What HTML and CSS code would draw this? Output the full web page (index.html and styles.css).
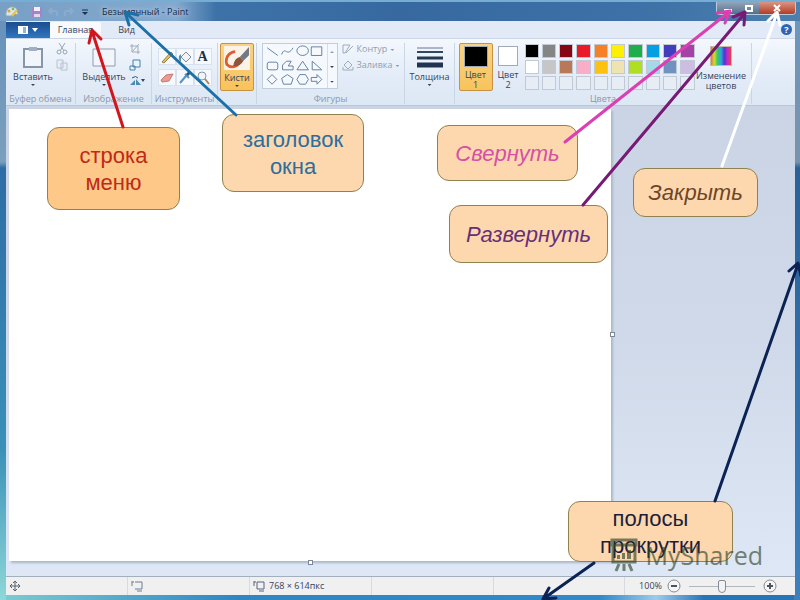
FILE: index.html
```html
<!DOCTYPE html>
<html lang="ru">
  <head>
    <meta charset="UTF-8" />
    <title>Безымянный - Paint</title>
    <link rel="stylesheet" href="styles.css">
  </head>
  <body>
    <div class="window">
      <header class="titlebar">
        <svg class="app-icon" viewBox="0 0 14 14"><path d="M1 11C0 5 4 1 8 2c4 0 5 4 5 8l-4-1-3 2z" fill="#d9e6e6" stroke="#8aa3b4"/><circle cx="4" cy="6" r="1.5" fill="#e0a43c"/><circle cx="8" cy="4" r="1.3" fill="#79b65c"/><path d="M7 11l5-6" stroke="#e9c14c" stroke-width="2"/></svg>
        <button class="quick" aria-label="Сохранить"><svg viewBox="0 0 12 12"><path d="M1 1h10v10H1z" fill="#a583c9"/><path d="M3 1h6v4H3z" fill="#f3eefa"/><path d="M3 8h6v3H3z" fill="#e3d7f0"/></svg></button>
        <button class="quick faded" aria-label="Отменить"><svg viewBox="0 0 12 12"><path d="M2 5h6q3 0 2 5M5 2L2 5l3 3" fill="none" stroke="#9cb6d4" stroke-width="2"/></svg></button>
        <button class="quick faded" aria-label="Вернуть"><svg viewBox="0 0 12 12"><path d="M10 5H4q-3 0-2 5M7 2l3 3-3 3" fill="none" stroke="#9cb6d4" stroke-width="2"/></svg></button>
        <button class="quick" aria-label="Настройка панели"><svg viewBox="0 0 12 12"><path d="M3 4h6" stroke="#1d3150"/><path d="M3 6h6l-3 3z" fill="#1d3150"/></svg></button>
        <h1>Безымянный - Paint</h1>
        <div class="window-buttons">
          <button aria-label="Свернуть окно"><svg viewBox="0 0 12 10"><path d="M2 6h8v3H2z" fill="#fff"/></svg></button>
          <button aria-label="Развернуть окно"><svg viewBox="0 0 12 10"><path d="M3 3h6v5H3z" fill="none" stroke="#fff" stroke-width="2"/></svg></button>
          <button class="close" aria-label="Закрыть окно"><svg viewBox="0 0 12 10"><path d="M3 2l6 6M9 2L3 8" stroke="#fff" stroke-width="2"/></svg></button>
        </div>
      </header>

      <nav class="tabs">
        <button class="file-tab" aria-label="Файл"><svg viewBox="0 0 24 10"><path d="M2 1h10v8H2z" fill="#fff"/><path d="M7 3h3M7 5h3M7 7h3" stroke="#2a68ad"/><path d="M16 3h6l-3 4z" fill="#fff"/></svg></button>
        <button class="tab active">Главная</button>
        <button class="tab">Вид</button>
        <button class="help" aria-label="Справка">?</button>
      </nav>

      <section class="ribbon">
        <div class="group clipboard">
          <div class="tools">
            <button class="big"><svg viewBox="0 0 24 24"><path d="M3 4h18v18H3z" fill="#f2f5fa" stroke="#8797ab" stroke-width="2"/><path d="M8 2h8v4H8z" fill="#a3afc0"/></svg>Вставить<i class="caret"></i></button>
            <div class="stack">
              <button aria-label="Вырезать"><svg viewBox="0 0 12 12"><path d="M3 0l5 8M9 0L4 8" stroke="#99a6b6" fill="none"/><circle cx="3" cy="9" r="2" fill="none" stroke="#99a6b6"/><circle cx="9" cy="9" r="2" fill="none" stroke="#99a6b6"/></svg></button>
              <button aria-label="Копировать"><svg viewBox="0 0 12 12"><path d="M1 1h6v8H1zM5 4h6v7H5z" fill="#e9eef6" stroke="#b7c2d1"/></svg></button>
            </div>
          </div>
          <span class="caption">Буфер обмена</span>
        </div>

        <div class="group image">
          <div class="tools">
            <button class="big"><svg viewBox="0 0 24 24"><path d="M1 4h22v17H1z" fill="#f2f6fb" stroke="#8c9db3"/></svg>Выделить<i class="caret"></i></button>
            <div class="stack">
              <button aria-label="Обрезать"><svg viewBox="0 0 12 12"><path d="M3 1v8h8M1 3h8v8M3 9l7-8" fill="none" stroke="#a0acba"/></svg></button>
              <button aria-label="Изменить размер"><svg viewBox="0 0 12 12"><path d="M4 1h7v7H4zM1 7h5v4H1z" fill="#e8f3fb" stroke="#4481ac"/></svg></button>
              <button aria-label="Повернуть"><svg viewBox="0 0 16 12"><path d="M1 10l5-5v5zM7 10V4l5 6z" fill="#4d8cae"/><path d="M3 3q4-3 6 0" fill="none" stroke="#27577f"/><path d="M12 4h4l-2 3z" fill="#33465d"/></svg></button>
            </div>
          </div>
          <span class="caption">Изображение</span>
        </div>

        <div class="group instruments">
          <div class="tools tool-grid">
            <button aria-label="Карандаш"><svg viewBox="0 0 14 14"><path d="M2 12l9-10 2 2-9 9z" fill="#e2bd58" stroke="#9b844c"/></svg></button>
            <button aria-label="Заливка цветом"><svg viewBox="0 0 14 14"><path d="M3 7l5-5 5 5-5 5z" fill="#f1f4f7" stroke="#7c8c9c"/><path d="M1 6l2-2v8q-3-2-2-6z" fill="#5f8fa9"/></svg></button>
            <button class="letter">A</button>
            <button aria-label="Ластик"><svg viewBox="0 0 14 14"><path d="M1 9l5-5 7-1-4 7-7 1z" fill="#eb9c92" stroke="#c57972"/></svg></button>
            <button aria-label="Палитра"><svg viewBox="0 0 14 14"><path d="M2 12l6-7M7 3l4 4" stroke="#5b91c0" stroke-width="2"/><path d="M9 4l3-3" stroke="#365372" stroke-width="3"/></svg></button>
            <button aria-label="Масштаб"><svg viewBox="0 0 14 14"><circle cx="6" cy="5" r="4" fill="#eef6fc" stroke="#8797a8"/><path d="M9 8l4 5" stroke="#a9865d" stroke-width="2"/></svg></button>
          </div>
          <span class="caption">Инструменты</span>
        </div>

        <div class="group brushes">
          <button class="big selected"><svg viewBox="0 0 28 26"><path d="M0 0h28v26H0z" fill="#fcf3e8"/><path d="M12 6C4 7 1 14 3 20c5 5 13 2 14-4" fill="none" stroke="#dc5c34" stroke-width="3"/><path d="M17 12L27 1v9l-6 6z" fill="#707989"/><path d="M10 22q1-9 7-10l4 4q-3 6-11 6z" fill="#8c563c"/></svg>Кисти<i class="caret"></i></button>
        </div>

        <div class="group shapes">
          <div class="tools">
            <div class="shape-box">
              <svg viewBox="0 0 64 46" role="img" aria-label="Фигуры"><g fill="none" stroke="#607f9c"><path d="M3 4l11 8M18 11c4-10 5 4 12-7M49 3h11v9H49z"/><ellipse cx="40" cy="7" rx="6" ry="5"/><rect x="3" y="19" width="11" height="8" rx="2"/><path d="M19 27v-5l4-4h5l-3 5h5v4zM34 27l6-9 6 9zM50 18v9h10zM8 32l5 5-5 5-5-5zM24 32l6 4-2 6h-8l-2-6zM37 32h6l3 5-3 5h-6l-3-5zM49 35h6v-3l5 5-5 5v-3h-6z"/></g></svg>
              <div class="scroller"><i class="caret up"></i><i class="caret"></i><i class="caret"></i></div>
            </div>
            <div class="options">
              <button><svg viewBox="0 0 12 12"><path d="M1 2h7L3 10H1zM4 10l7-7" fill="none" stroke="#9eacbb"/></svg>Контур<i class="caret"></i></button>
              <button><svg viewBox="0 0 12 12"><path d="M2 6l4-4 4 4-4 4zM1 8v3h10V8" fill="none" stroke="#9eacbb"/></svg>Заливка<i class="caret"></i></button>
            </div>
          </div>
          <span class="caption">Фигуры</span>
        </div>

        <div class="group thickness">
          <button class="big"><svg viewBox="0 0 26 24"><path d="M0 3h26" stroke="#667890"/><path d="M0 7h26" stroke="#344761" stroke-width="2"/><path d="M0 13h26" stroke="#253852" stroke-width="3"/><path d="M0 20h26" stroke="#203451" stroke-width="5"/></svg>Толщина<i class="caret"></i></button>
        </div>

        <div class="group colors">
          <div class="tools">
            <button class="big selected"><i class="swatch first"></i><span>Цвет<br>1</span></button>
            <button class="big second"><i class="swatch"></i><span>Цвет<br>2</span></button>
            <div class="palette">
              <button class="black" aria-label="Чёрный"></button>
              <button class="gray" aria-label="Серый"></button>
              <button class="maroon" aria-label="Тёмно-красный"></button>
              <button class="red" aria-label="Красный"></button>
              <button class="orange" aria-label="Оранжевый"></button>
              <button class="yellow" aria-label="Жёлтый"></button>
              <button class="green" aria-label="Зелёный"></button>
              <button class="blue" aria-label="Бирюзовый"></button>
              <button class="indigo" aria-label="Индиго"></button>
              <button class="purple" aria-label="Лиловый"></button>
              <button class="white" aria-label="Белый"></button>
              <button class="silver" aria-label="Светло-серый"></button>
              <button class="brown" aria-label="Коричневый"></button>
              <button class="pink" aria-label="Розовый"></button>
              <button class="gold" aria-label="Золотой"></button>
              <button class="cream" aria-label="Светло-жёлтый"></button>
              <button class="lime" aria-label="Травяной"></button>
              <button class="sky" aria-label="Голубой"></button>
              <button class="steel" aria-label="Сизый"></button>
              <button class="lilac" aria-label="Сиреневый"></button>
              <span></span><span></span><span></span><span></span><span></span>
              <span></span><span></span><span></span><span></span><span></span>
            </div>
            <button class="big edit"><i class="rainbow"></i><span>Изменение<br>цветов</span></button>
          </div>
          <span class="caption">Цвета</span>
        </div>
      </section>

      <main class="workspace">
        <div class="canvas"></div>
        <i class="handle side"></i>
        <i class="handle bottom"></i>
      </main>

      <footer class="statusbar">
        <div class="cell"><svg viewBox="0 0 12 12"><path d="M6 1v10M1 6h10M4 3l2-2 2 2M4 9l2 2 2-2M3 4L1 6l2 2M9 4l2 2-2 2" fill="none" stroke="#59616e"/></svg></div>
        <div class="cell"><svg viewBox="0 0 12 12"><path d="M4 2h7v7H4M1 1v5M1 2h2M6 11h5" fill="none" stroke="#6f7c93"/></svg></div>
        <div class="cell"><svg viewBox="0 0 12 12"><path d="M4 2h7v7H4zM1 1v5M1 2h2M6 11h5" fill="none" stroke="#56627c"/></svg>768 × 614пкс</div>
        <div class="cell"></div>
        <div class="cell last"></div>
        <div class="zoom">
          <label for="zoom">100%</label>
          <button aria-label="Уменьшить"><svg viewBox="0 0 14 14"><circle cx="7" cy="7" r="6" fill="#f5f5f6" stroke="#858b94"/><path d="M4 7h6" stroke="#4d535d" stroke-width="2"/></svg></button>
          <input id="zoom" type="range" min="0" max="100" value="50">
          <button aria-label="Увеличить"><svg viewBox="0 0 14 14"><circle cx="7" cy="7" r="6" fill="#f5f5f6" stroke="#858b94"/><path d="M4 7h6M7 4v6" stroke="#4d535d" stroke-width="2"/></svg></button>
        </div>
      </footer>

      <div class="note menu-note">строка<br>меню</div>
      <div class="note title-note">заголовок<br>окна</div>
      <div class="note minimize-note">Свернуть</div>
      <div class="note maximize-note">Развернуть</div>
      <div class="note close-note">Закрыть</div>
      <div class="note scroll-note">полосы<br>прокрутки</div>

      <svg class="arrows" viewBox="0 0 800 600" preserveAspectRatio="none" aria-hidden="true">
        <g fill="none" stroke-width="3" stroke-linecap="round" stroke-linejoin="round">
          <path stroke="#d3161d" d="M123 127L92 31M89 43l3-13 9 9"/>
          <path stroke="#1b70aa" d="M236 115L125 12M129 25l-4-13 13 3"/>
          <path stroke="#db3fb1" d="M565 142L729 12M717 13l13-2-5 12"/>
          <path stroke="#771a75" d="M583 205L745 13M733 17l12-5-1 13"/>
          <path stroke="#fff" d="M722 166L777 13M768 21l9-9 3 13"/>
          <path stroke="#0b2254" d="M715 501L798 264M789 271l9-8 3 13"/>
          <path stroke="#0b2254" d="M594 563L543 599M549 588l-6 11 13-1"/>
        </g>
      </svg>

      <div class="watermark">
        <svg viewBox="0 0 28 34"><path d="M2 2h24v5H2zM3 7h22v17H3zM9 26l-3 7M14 26v7M19 26l3 7" fill="none" stroke="currentColor" stroke-width="3"/><path d="M7 17h3v4H7zM12 15h3v6h-3zM17 12h4v9h-4z" fill="currentColor"/></svg>
        MyShared
      </div>
    </div>
  </body>
</html>
```

FILE: styles.css
```css
* {
  box-sizing: border-box;
}

body {
  margin: 0;
  font-family: "Open Sans", "Noto Sans", sans-serif;
  font-size: 9px;
  line-height: 10px;
  color: #34445c;
}

button {
  padding: 0;
  border: none;
  background: none;
  font: inherit;
  color: inherit;
}

svg {
  display: block;
}

.window {
  position: relative;
  display: flex;
  flex-direction: column;
  height: 100vh;
  padding: 0 5px 5px;
  overflow: hidden;
  background:
    linear-gradient(to bottom, #6b97bf, #7893ac 27%, #2b6098 28%, #3d80bc) right / 6px 100% no-repeat,
    linear-gradient(to bottom, #6590ba, #7b9fbd 27%, #2e6ca5 28%, #3a91b8 75%, #8ed8d9) left / 6px 100% no-repeat,
    linear-gradient(to right, #7fcbd1, #2e86c2 30%, #3189c9 75%, #9ccbe8 82%, #2874b8 88%);
}

/* title bar */
.titlebar {
  display: flex;
  flex: none;
  align-items: center;
  gap: 4px;
  height: 21px;
  margin: 0 -5px;
  padding-left: 5px;
  border-top: 2px solid #76aed3;
  background: linear-gradient(to right, #789fc5, #83a9ce 22%, #3d72a8 27%, #3769a0 50%, #3d71a7 80%, #4d7fad);
}

.app-icon {
  width: 14px;
  height: 14px;
  margin-right: 8px;
}

.quick svg {
  width: 12px;
  height: 12px;
}

.faded {
  opacity: 0.5;
}

.titlebar h1 {
  margin: 0 auto 0 7px;
  font-size: 9px;
  font-weight: 500;
  color: #172a44;
  text-shadow: 0 0 5px #dcecfa;
}

.window-buttons {
  display: flex;
  align-self: flex-start;
  margin-right: 4px;
  border: 1px solid #b9ccde;
  border-top: none;
  border-radius: 0 0 4px 4px;
  overflow: hidden;
}

.window-buttons button {
  display: grid;
  place-items: center;
  width: 21px;
  height: 12px;
  background: linear-gradient(#93a6bb, #536f8e);
}

.window-buttons svg {
  width: 12px;
  height: 10px;
}

.window-buttons .close {
  width: 36px;
  background: linear-gradient(#d99582, #b53b22);
}

/* tabs */
.tabs {
  display: flex;
  flex: none;
  height: 17px;
  padding-right: 3px;
  margin-left: 1px;
  background: #e2eaf7;
}

.file-tab {
  display: grid;
  place-items: center;
  width: 44px;
  margin-top: 1px;
  background: linear-gradient(#1c4c8d, #2865ad 60%, #2f79c1);
}

.file-tab svg {
  width: 24px;
  height: 10px;
}

.tab {
  width: 51px;
  margin-top: 1px;
}

.tab.active {
  background: #f8fafe;
  border-radius: 2px 2px 0 0;
}

.help {
  align-self: center;
  width: 11px;
  height: 11px;
  margin-left: auto;
  border-radius: 50%;
  background: #2c65b3;
  color: #fff;
  font-weight: 700;
}

/* ribbon */
.ribbon {
  display: flex;
  flex: none;
  height: 68px;
  margin-left: 1px;
  padding: 4px 0 1px;
  border-top: 1px solid #cbd7e7;
  border-bottom: 1px solid #b8c6da;
  background: linear-gradient(#f4f8fd, #e2ebf7 60%, #dde8f5);
}

.group {
  display: flex;
  flex-direction: column;
  flex: none;
  align-items: center;
  padding: 0 3px;
  border-right: 1px solid #cbd6e4;
}

.tools {
  display: flex;
  justify-content: center;
  height: 48px;
}

.caption {
  margin-top: 3px;
  color: #8a98ac;
  white-space: nowrap;
}

.clipboard {
  width: 70px;
}

.image {
  width: 76px;
}

.instruments {
  width: 66px;
}

.brushes {
  width: 39px;
}

.shapes {
  width: 148px;
}

.thickness {
  width: 50px;
}

.colors {
  width: 297px;
}

.big {
  display: flex;
  flex-direction: column;
  align-items: center;
  flex: none;
  height: 48px;
  padding-top: 2px;
}

.big svg {
  width: 26px;
  height: 24px;
  margin-bottom: 3px;
}

.caret {
  display: block;
  width: 4px;
  height: 2px;
  margin-top: 2px;
  background: currentColor;
  clip-path: polygon(0 0, 100% 0, 50% 100%);
}

.caret.up {
  opacity: 0.5;
  transform: rotate(180deg);
}

.stack {
  display: flex;
  flex-direction: column;
  gap: 4px;
  padding-left: 3px;
}

.stack svg {
  height: 12px;
}

.tool-grid {
  display: grid;
  grid-template-columns: repeat(3, 18px);
  grid-template-rows: 17px 17px;
  row-gap: 4px;
  padding-top: 5px;
}

.tool-grid button {
  display: grid;
  place-items: center;
  background: #f5f9fd;
  border: 1px solid #d8e2ee;
}

.tool-grid svg {
  width: 14px;
  height: 14px;
}

.tool-grid .letter {
  font: 700 14px "Liberation Serif", serif;
  color: #22303f;
}

.selected {
  width: 34px;
  border: 1px solid #c79343;
  border-radius: 2px;
  background: linear-gradient(#f8d386, #f9c35b);
}

.shape-box {
  display: flex;
  width: 76px;
  height: 46px;
  border: 1px solid #bfcedf;
  background: #f5f9fd;
}

.shape-box svg {
  width: 64px;
  height: 44px;
}

.scroller {
  display: flex;
  flex-direction: column;
  align-items: center;
  justify-content: space-around;
  flex: 1;
  border-left: 1px solid #d3deea;
}

.options {
  display: flex;
  flex-direction: column;
  gap: 4px;
  padding-left: 4px;
  color: #929fae;
}

.options button {
  display: flex;
  align-items: center;
  gap: 3px;
}

.options svg {
  width: 12px;
  height: 12px;
}

.swatch {
  width: 24px;
  height: 22px;
  margin-bottom: 3px;
  border: 1px solid #a1a9b4;
  background: #fff;
}

.swatch.first {
  background: #000;
}

.second {
  width: 31px;
  padding-top: 3px;
}

.second .swatch {
  width: 20px;
  height: 20px;
  margin-bottom: 4px;
}

.palette {
  display: grid;
  flex: none;
  grid-template-columns: repeat(10, 1fr);
  grid-template-rows: repeat(3, 14px);
  gap: 2px 3px;
  width: 171px;
  padding: 1px 0 0 1px;
}

.palette > * {
  border: 1px solid #c0c9d4;
  background: #e7edf5;
}

.palette .black { background: #000; }
.palette .gray { background: #858585; }
.palette .maroon { background: #850714; }
.palette .red { background: #e91b26; }
.palette .orange { background: #f58025; }
.palette .yellow { background: #fdf003; }
.palette .green { background: #20ae4d; }
.palette .blue { background: #069fe1; }
.palette .indigo { background: #423dbd; }
.palette .purple { background: #a243a5; }
.palette .white { background: #fff; }
.palette .silver { background: #c6c6c6; }
.palette .brown { background: #b97956; }
.palette .pink { background: #faadc7; }
.palette .gold { background: #fdc20f; }
.palette .cream { background: #efe4b0; }
.palette .lime { background: #afdf20; }
.palette .sky { background: #a4d9ea; }
.palette .steel { background: #7092be; }
.palette .lilac { background: #cdbde2; }

.edit {
  width: 53px;
}

.rainbow {
  width: 22px;
  height: 20px;
  margin: 1px 0 5px;
  border: 1px solid #c9b8a5;
  background: linear-gradient(to right, #eb6d4c, #cedc2f, #35c66a, #28a9df, #5735cd, #c32bc9, #e8413d);
}

/* drawing area */
.workspace {
  position: relative;
  flex: 1;
  display: flex;
  margin-left: 1px;
  padding: 3px 184px 15px 3px;
  background: linear-gradient(#cad4e5, #cfd9e9 50%, #dde7f5);
}

.canvas {
  flex: 1;
  background: #fff;
  box-shadow: 2px 2px 2px #abb8ca;
}

.handle {
  position: absolute;
  width: 5px;
  height: 5px;
  border: 1px solid #7d8797;
  background: #fff;
}

.handle.side {
  top: 48%;
  right: 180px;
}

.handle.bottom {
  bottom: 11px;
  left: 302px;
}

/* status bar */
.statusbar {
  display: flex;
  flex: none;
  align-items: center;
  height: 19px;
  margin-left: 1px;
  border-top: 1px solid #a3afbd;
  background: #f0f0f1;
}

.cell {
  display: flex;
  flex: 0 1 122px;
  align-items: center;
  gap: 4px;
  height: 18px;
  padding-left: 3px;
  border-right: 1px solid #d7dade;
}

.cell.last {
  flex: 1;
}

.cell svg {
  width: 12px;
  height: 12px;
}

.zoom {
  display: flex;
  align-items: center;
  justify-content: flex-end;
  gap: 5px;
  width: 170px;
  padding-right: 18px;
}

.zoom svg {
  width: 14px;
  height: 14px;
}

.zoom input {
  appearance: none;
  width: 66px;
  height: 14px;
  margin: 0 3px;
  background: linear-gradient(#b3b6ba, #b3b6ba) center / 100% 1px no-repeat;
}

.zoom input::-webkit-slider-thumb {
  appearance: none;
  width: 8px;
  height: 13px;
  border: 1px solid #858b94;
  border-radius: 2px 2px 4px 4px;
  background: #f2f3f4;
}

/* notes over the window */
.note {
  position: absolute;
  display: flex;
  align-items: center;
  justify-content: center;
  border: 1px solid #8f8250;
  border-radius: 12px;
  background: #fdd7ae;
  font-family: "Liberation Sans", sans-serif;
  font-size: 22px;
  line-height: 27px;
  text-align: center;
}

.menu-note {
  top: 127px;
  left: 47px;
  width: 133px;
  height: 83px;
  background: #fdc888;
  color: #c02a16;
}

.title-note {
  top: 114px;
  left: 222px;
  width: 142px;
  height: 78px;
  color: #2c6e9e;
}

.minimize-note,
.maximize-note,
.close-note {
  font-style: italic;
}

.minimize-note {
  top: 125px;
  left: 437px;
  width: 141px;
  height: 56px;
  color: #d550a6;
}

.maximize-note {
  top: 205px;
  left: 449px;
  width: 159px;
  height: 58px;
  color: #65307a;
}

.close-note {
  top: 168px;
  left: 633px;
  width: 125px;
  height: 49px;
  color: #6d4526;
}

.scroll-note {
  top: 501px;
  left: 568px;
  width: 165px;
  height: 61px;
  color: #1c1e3c;
}

.arrows {
  position: absolute;
  inset: 0;
  width: 100%;
  height: 100%;
}

.watermark {
  position: absolute;
  right: 37px;
  bottom: 28px;
  display: flex;
  align-items: center;
  gap: 8px;
  color: #34482d;
  font-size: 25px;
  line-height: 34px;
  opacity: 0.65;
}

.watermark svg {
  width: 28px;
  height: 34px;
}
```
